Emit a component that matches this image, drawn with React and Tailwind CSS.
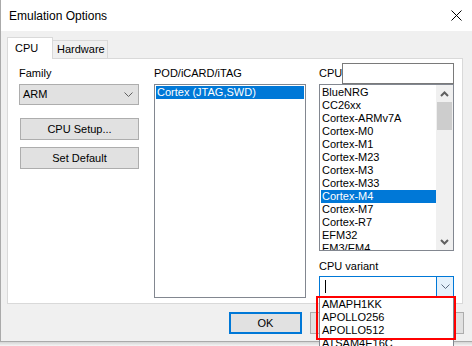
const cpus = [
    'BlueNRG',
    'CC26xx',
    'Cortex-ARMv7A',
    'Cortex-M0',
    'Cortex-M1',
    'Cortex-M23',
    'Cortex-M3',
    'Cortex-M33',
    'Cortex-M4',
    'Cortex-M7',
    'Cortex-R7',
    'EFM32',
    'EM3/EM4',
];

const variants = ['AMAPH1KK', 'APOLLO256', 'APOLLO512', 'ATSAM4E16C'];

const Chevron = ({ up = false, className = '' }) => (
    <svg width="9" height="5" viewBox="0 0 9 5" className={className}>
        <path
            d={up ? 'M0.5 4.5 L4.5 0.5 L8.5 4.5' : 'M0.5 0.5 L4.5 4.5 L8.5 0.5'}
            fill="none"
            stroke="currentColor"
            strokeWidth="1"
        />
    </svg>
);

const ScrollArrow = ({ up = false }) => (
    <svg width="9" height="6" viewBox="0 0 9 6">
        <path
            d={up ? 'M1 5 L4.5 1.5 L8 5' : 'M1 1 L4.5 4.5 L8 1'}
            fill="none"
            stroke="#606060"
            strokeWidth="2"
        />
    </svg>
);

const Button = ({ children, focused = false, className = 'w-[73px]' }) => (
    <div
        className={`flex h-[22px] shrink-0 items-center justify-center bg-[#e1e1e1] ${className} ${focused ? 'border-2 border-[#0078d7]' : 'border border-[#adadad]'
            }`}
    >
        {children}
    </div>
);

const ListRow = ({ label, selected }) => (
    <div
        className={`h-[13px] pl-[1px] leading-[13px] whitespace-nowrap ${selected ? 'bg-[#0078d7] text-white' : ''
            }`}
    >
        {label}
    </div>
);

export default function App() {
    return (
        <div
            className="relative h-[346px] w-[472px] overflow-hidden bg-white text-[11px] text-black"
            style={{ fontFamily: '"Liberation Sans", Arial, sans-serif' }}
        >
            <div className="flex h-[342px] flex-col border-b border-l border-[#aaaaaa]">
                {/* title bar */}
                <div className="flex h-[31px] items-center justify-between bg-white pl-[8px] pr-[10px]">
                    <span className="text-[12px]">Emulation Options</span>
                    <svg width="11" height="11" viewBox="0 0 11 11">
                        <path d="M0.5 0.5 L10.5 10.5 M10.5 0.5 L0.5 10.5" stroke="#000" strokeWidth="1" />
                    </svg>
                </div>

                <div className="flex flex-1 flex-col bg-[#f0f0f0] pl-[6px] pt-[6px]">
                    {/* tabs */}
                    <div className="flex items-end">
                        <div className="relative z-10 -mb-px flex h-[22px] w-[46px] items-center border-x border-t border-[#d9d9d9] bg-white pl-[7px]">
                            CPU
                        </div>
                        <div className="-ml-px flex h-[18px] w-[56px] items-center border border-b-0 border-[#d9d9d9] bg-[#f0f0f0] pl-[4px]">
                            Hardware
                        </div>
                    </div>

                    {/* tab panel */}
                    <div className="flex h-[246px] w-[456px] border border-[#d9d9d9] bg-white pl-[11px] pt-[4px]">
                        {/* family column */}
                        <div className="flex w-[120px] flex-col">
                            <div className="flex h-[21px] items-center">Family</div>
                            <div className="flex h-[21px] items-center justify-between border border-[#adadad] bg-[#e1e1e1] pl-[3px] pr-[5px]">
                                <span>ARM</span>
                                <Chevron className="text-[#606060]" />
                            </div>
                            <div className="ml-px mt-[13px] flex flex-col gap-[7px]">
                                <Button className="w-[119px]">CPU Setup...</Button>
                                <Button className="w-[119px]">Set Default</Button>
                            </div>
                        </div>

                        {/* pod column */}
                        <div className="ml-[15px] flex w-[152px] flex-col">
                            <div className="flex h-[21px] items-center">POD/iCARD/iTAG</div>
                            <div className="h-[214px] border border-[#828790] p-[1px]">
                                <ListRow label="Cortex (JTAG,SWD)" selected />
                            </div>
                        </div>

                        {/* cpu column */}
                        <div className="ml-[13px] flex w-[135px] flex-col">
                            <div className="flex h-[21px] items-center justify-between">
                                <span>CPU</span>
                                <div className="h-[21px] w-[113px] border border-[#7a7a7a] bg-white"></div>
                            </div>
                            <div className="flex h-[167px] border border-[#828790]">
                                <div className="flex-1 overflow-hidden pl-[1px] pt-[1px]">
                                    {cpus.map((c) => (
                                        <ListRow key={c} label={c} selected={c === 'Cortex-M4'} />
                                    ))}
                                </div>
                                <div className="flex w-[17px] flex-col bg-[#f0f0f0]">
                                    <div className="flex h-[17px] items-center justify-center">
                                        <ScrollArrow up />
                                    </div>
                                    <div className="mx-[1px] h-[28px] bg-[#cdcdcd]"></div>
                                    <div className="flex-1"></div>
                                    <div className="flex h-[17px] items-center justify-center">
                                        <ScrollArrow />
                                    </div>
                                </div>
                            </div>
                            <div className="mb-[3px] mt-[9px] leading-[13px]">CPU variant</div>
                            <div className="relative">
                                <div className="flex h-[21px] border border-[#0078d7] bg-white">
                                    <div className="flex flex-1 items-center pl-[5px]">
                                        <div className="h-[13px] w-px bg-black"></div>
                                    </div>
                                    <div className="flex w-[17px] items-center justify-center border-l border-[#0078d7] bg-[#e5f1fb]">
                                        <Chevron className="text-[#5a6a80]" />
                                    </div>
                                </div>

                                {/* opened dropdown */}
                                <div className="absolute left-0 top-[21px] z-20 h-[60px] w-[135px] border-x border-[#828790] bg-white pl-[2px] pt-[1px]">
                                    {variants.map((v) => (
                                        <div key={v} className="h-[13px] leading-[13px]">
                                            {v}
                                        </div>
                                    ))}
                                </div>
                                <div className="absolute left-[-3px] top-[20px] z-30 h-[44px] w-[140px] border-2 border-[#ff0000]"></div>
                            </div>
                        </div>
                    </div>

                    {/* dialog buttons */}
                    <div className="mt-[8px] flex justify-end gap-[8px] pr-[8px]">
                        <Button focused>OK</Button>
                        <Button>Cancel</Button>
                        <Button>Help</Button>
                    </div>
                </div>
            </div>
            <div className="h-[4px] bg-linear-to-b from-[#d4d4d4] to-[#f6f6f6]"></div>
        </div>
    );
}
